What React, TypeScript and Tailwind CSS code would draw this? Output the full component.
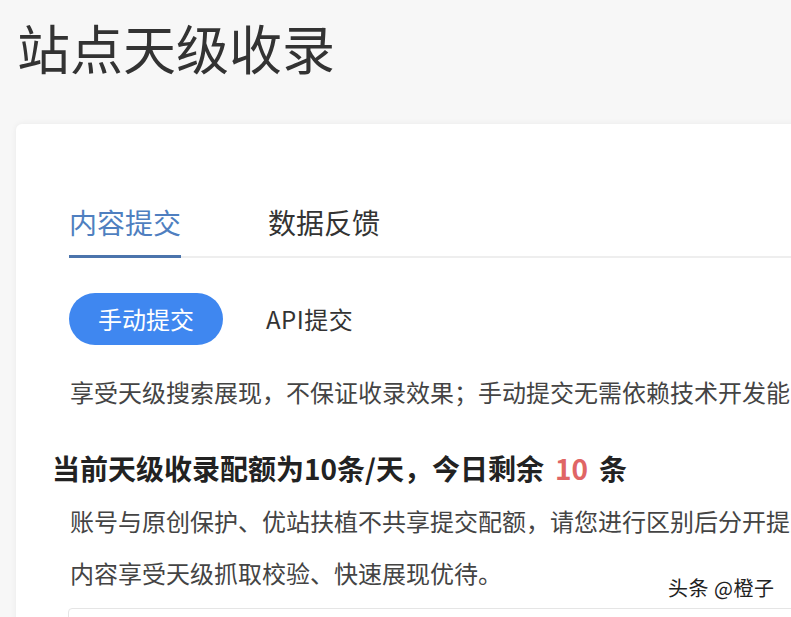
import React from 'react';

const tabs = [
  { label: '内容提交', active: true },
  { label: '数据反馈', active: false },
];

const App: React.FC = () => {
  return (
    <div className="relative h-[617px] w-full overflow-hidden bg-[#f7f7f7] font-['Noto_Sans_CJK_SC','Noto_Sans',sans-serif] text-[#333]">
      <h1 className="pl-[17px] pt-[21px] text-[53px] font-normal leading-none text-[#333]">站点天级收录</h1>

      <div className="ml-[16px] mt-[50px] w-[900px] rounded-[6px] bg-white pb-10 shadow-[0_0_6px_rgba(0,0,0,0.06)]">
        {/* 顶部标签 */}
        <div className="ml-[53px] flex gap-[87px] border-b-2 border-[#eeeeee] pt-[84px]">
          {tabs.map((t) => (
            <div
              key={t.label}
              className={`-mb-[2px] pb-[19px] text-[28px] leading-none ${
                t.active ? 'border-b-[3px] border-[#4b74ac] text-[#4f7fc0]' : 'border-b-[3px] border-transparent text-[#333]'
              }`}
            >
              {t.label}
            </div>
          ))}
        </div>

        <div className="ml-[53px] mt-[35px] flex items-center gap-[43px]">
          <button className="h-[52px] rounded-full bg-[#3f87f0] px-[29px] text-[24px] leading-none text-white">手动提交</button>
          <span className="text-[24px] leading-none tracking-[0.5px] text-[#333]">API提交</span>
        </div>

        <p className="ml-[54px] mt-[21px] whitespace-nowrap text-[24px] leading-[52px] text-[#444]">
          享受天级搜索展现，不保证收录效果；手动提交无需依赖技术开发能力，即可完成提交
        </p>

        <h2 className="ml-[36px] mt-[30px] whitespace-nowrap text-[28px] font-bold leading-[40px] text-[#222]">
          当前天级收录配额为10条/天，今日剩余
          <span className="mx-[11px] text-[#e06565]">10</span>条
        </h2>

        <div className="ml-[54px] mt-[7px] text-[24px] leading-[52px] text-[#444]">
          <p className="whitespace-nowrap">账号与原创保护、优站扶植不共享提交配额，请您进行区别后分开提交，</p>
          <p className="whitespace-nowrap">内容享受天级抓取校验、快速展现优待。</p>
        </div>

        <div className="ml-[52px] mt-[9px] h-[120px] rounded-[4px] border border-[#e5e5e5] bg-white" />
      </div>

      <div className="absolute left-[668px] top-[575px] text-[20px] leading-[26px] tracking-[0.5px] text-[#222] [text-shadow:0_0_3px_#fff]">
        头条 @橙子
      </div>
    </div>
  );
};

export default App;
